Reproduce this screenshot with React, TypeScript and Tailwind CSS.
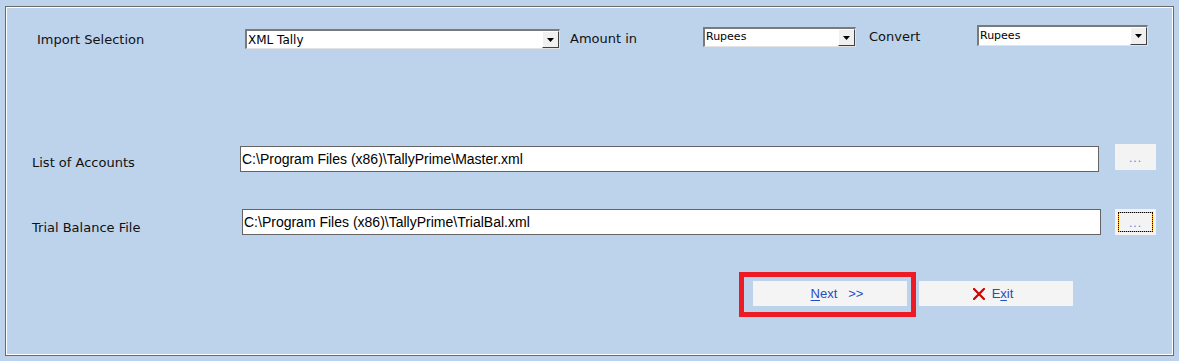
import React from "react";

const label = "font-['DejaVu_Sans',sans-serif] text-[13px] leading-[16px] text-[#111]";

function Combo({ w, h, text, textSize }: { w: string; h: string; text: string; textSize: string }) {
  return (
    <div className={`${w} ${h} flex bg-white border-t-2 border-l-2 border-b border-r border-t-[#7a7a7a] border-l-[#7a7a7a] border-b-[#e3e3e3] border-r-[#e3e3e3]`}>
      <div className={`flex-1 pl-[1px] flex items-center font-['DejaVu_Sans',sans-serif] ${textSize} text-black whitespace-nowrap overflow-hidden`}>
        {text}
      </div>
      <div className="w-[17px] h-full bg-[#f0f0f0] border-t border-l border-t-white border-l-white border-b border-r border-b-[#404040] border-r-[#404040] flex items-center justify-center">
        <svg width="7" height="4" viewBox="0 0 7 4">
          <polygon points="0,0 7,0 3.5,4" fill="#000" />
        </svg>
      </div>
    </div>
  );
}

function PathInput({ w, text }: { w: string; text: string }) {
  return (
    <div className={`${w} h-[26px] bg-white border border-[#646464] flex items-center pl-[1px] font-['Comic_Sans_MS','Liberation_Sans',sans-serif] text-[14px] text-black whitespace-nowrap overflow-hidden`}>
      {text}
    </div>
  );
}

function Dots() {
  return <span className="font-['Liberation_Sans',sans-serif] text-[12px] text-[#3a8ee6] leading-none tracking-[1px]">...</span>;
}

export default function App() {
  return (
    <div className="w-[1179px] h-[361px] bg-[#bdd3ec] pt-[6px] pl-[5px]">
      <div className="w-[1169px] h-[350px] border border-[#6a6a6a] shadow-[inset_1px_1px_0_#ffffff,inset_-1px_-1px_0_#ffffff] flex flex-col">
        {/* Row 1 */}
        <div className="h-[137px] flex items-start">
          <div className={`${label} ml-[31px] mt-[25px] w-[208px]`}>Import Selection</div>
          <div className="mt-[22px]">
            <Combo w="w-[315px]" h="h-[20px]" text="XML Tally" textSize="text-[12px]" />
          </div>
          <div className={`${label} ml-[10px] mt-[24px] w-[133px]`}>Amount in</div>
          <div className="mt-[20px]">
            <Combo w="w-[153px]" h="h-[20px]" text="Rupees" textSize="text-[11px]" />
          </div>
          <div className={`${label} ml-[13px] mt-[22px] w-[108px]`}>Convert</div>
          <div className="mt-[18px]">
            <Combo w="w-[171px]" h="h-[21px]" text="Rupees" textSize="text-[11px]" />
          </div>
        </div>

        {/* Row 2 */}
        <div className="h-[65px] flex items-start">
          <div className={`${label} ml-[26px] mt-[11px] w-[208px]`}>List of Accounts</div>
          <div className="mt-[2px]">
            <PathInput w="w-[859px]" text="C:\Program Files (x86)\TallyPrime\Master.xml" />
          </div>
          <div className="ml-[16px] w-[41px] h-[26px] bg-[#f3f3f3] flex items-end justify-center pb-[6px]">
            <Dots />
          </div>
        </div>

        {/* Row 3 */}
        <div className="h-[63px] flex items-start">
          <div className={`${label} ml-[26px] mt-[11px] w-[210px]`}>Trial Balance File</div>
          <PathInput w="w-[859px]" text="C:\Program Files (x86)\TallyPrime\TrialBal.xml" />
          <div className="ml-[14px] w-[41px] h-[26px] bg-[#f3f3f3] p-[3px]">
            <div className="w-full h-full bg-[#f7a21b] border border-dotted border-black">
              <div className="w-full h-full bg-[#f3f3f3] flex items-end justify-center pb-[2px]">
                <Dots />
              </div>
            </div>
          </div>
        </div>

        {/* Row 4 */}
        <div className="flex items-start">
          <div className="ml-[733px] w-[177px] h-[45px] border-[5px] border-[#ed1c24] pl-[9px] pt-[4px]">
            <div className="w-[154px] h-[25px] bg-[#f4f4f4] flex items-center justify-center pl-[14px] font-['Liberation_Sans',sans-serif] text-[13px] text-[#1f4fc4] whitespace-pre">
              <span className="underline underline-offset-2">N</span>
              <span>{"ext   >>"}</span>
            </div>
          </div>
          <div className="ml-[3px] mt-[9px] w-[154px] h-[25px] bg-[#f4f4f4] flex items-center justify-center pr-[6px] font-['Liberation_Sans',sans-serif] text-[13px] text-[#1f4fc4] gap-[7px]">
            <svg width="12" height="12" viewBox="0 0 12 12">
              <path d="M1 1 L11 11 M11 1 L1 11" stroke="#d20000" strokeWidth="2.2" strokeLinecap="square" />
            </svg>
            <span>
              E<span className="underline underline-offset-2">x</span>it
            </span>
          </div>
        </div>
      </div>
    </div>
  );
}
